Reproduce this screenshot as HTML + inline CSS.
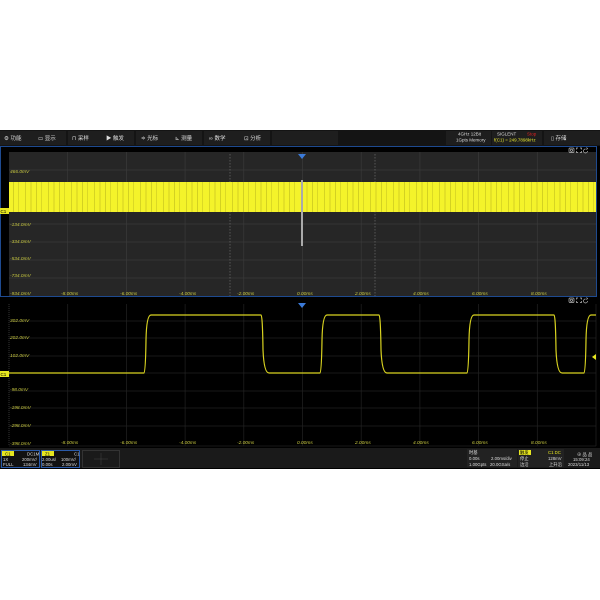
<!DOCTYPE html><html><head><style>
body{margin:0;background:#fff;width:600px;height:600px;overflow:hidden}
svg{display:block}
text{font-family:"Liberation Sans","Noto Sans CJK SC",sans-serif}
</style></head><body>
<svg width="600" height="600" viewBox="0 0 600 600">
<defs>
<pattern id="nz" width="23" height="30" patternUnits="userSpaceOnUse">
<rect width="23" height="30" fill="#f4f32a"/>
<rect x="2" width="1" height="30" fill="#c9c820" opacity=".7"/>
<rect x="7" width="2" height="30" fill="#d8d625" opacity=".6"/>
<rect x="13" width="1" height="30" fill="#bdbb1c" opacity=".6"/>
<rect x="18" width="1" height="30" fill="#d0cf22" opacity=".7"/>
</pattern>
<g id="ic" fill="none" stroke="#bbb" stroke-width=".7">
<rect x="0" y="0.5" width="5" height="4.5" rx="1"/><circle cx="2.5" cy="2.8" r="1.1"/>
<path d="M9 0.5h-1.5v1.5M11 0.5h1.5v1.5M9 5h-1.5v-1.5M11 5h1.5v-1.5"/>
<path d="M16.5 1.5a2 2 0 1 0 2 2M17.5 0l1 1.2-1.2 0.8"/>
</g>
</defs>
<rect x="0" y="130" width="600" height="339" fill="#000"/>
<rect x="0" y="130" width="600" height="16" fill="#141414"/>
<g fill="#1e1e1e">
<rect x="0" y="131" width="66" height="14"/><rect x="68" y="131" width="66" height="14"/><rect x="136" y="131" width="66" height="14"/><rect x="204" y="131" width="66" height="14"/><rect x="272" y="131" width="66" height="14"/>
<rect x="446" y="131" width="45" height="14"/><rect x="492" y="131" width="50" height="14"/><rect x="544" y="131" width="56" height="14"/>
</g>
<g font-size="5.5" fill="#ddd">
<text x="4" y="140">⚙ 功能</text><text x="38" y="140">▭ 显示</text><text x="72" y="140">⊓ 采样</text><text x="106" y="140">▶ 触发</text><text x="141" y="140">≑ 光标</text><text x="175" y="140">⊾ 测量</text><text x="209" y="140">∞ 数学</text><text x="244" y="140">⊡ 分析</text>
<text x="458" y="135.5" font-size="4.5">4GHz 12Bit</text><text x="456" y="141.5" font-size="4.5">1Gpts Memory</text>
<text x="497" y="135.5" font-size="4.5">SIGLENT</text><text x="527" y="135.5" font-size="4.5" fill="#d22">Stop</text>
<text x="494" y="141.5" font-size="4.5" fill="#e6e630">f(C1) = 249.7898kHz</text>
<text x="551" y="140">▯ 存储</text>
</g>
<rect x="0.5" y="146.5" width="596" height="150" fill="#000" stroke="#1e4a90"/>
<rect x="9" y="152" width="587" height="144" fill="#262626"/>
<g stroke="#3a3a3a" stroke-width="0.7">
<path d="M67.7 152V296M126.4 152V296M185.1 152V296M243.8 152V296M302.5 152V296M361.2 152V296M419.9 152V296M478.6 152V296M537.3 152V296"/>
<path d="M9 170H596M9 188H596M9 206H596M9 224H596M9 242H596M9 260H596M9 278H596"/>
</g>
<path d="M230 154V296M375 154V296" stroke="#777" stroke-width=".6" stroke-dasharray="1.5 1.5"/>
<rect x="9" y="182" width="587" height="30" fill="url(#nz)"/>
<rect x="301" y="180" width="2" height="66" fill="#aaa"/>
<path d="M298 154h8l-4 5z" fill="#3b7ad8"/>
<rect x="0" y="208" width="9" height="6" fill="#e6e620"/><text x="0.5" y="213" font-size="4.5" fill="#000">C1</text>
<g font-size="4.8" fill="#c8c840" font-style="italic">
<text x="10" y="173">466.0mV</text><text x="10" y="226">-134.0mV</text><text x="10" y="243">-334.0mV</text><text x="10" y="260">-534.0mV</text><text x="10" y="277">-734.0mV</text><text x="10" y="295">-934.0mV</text>
<text x="61" y="295">-8.00ms</text><text x="120" y="295">-6.00ms</text><text x="179" y="295">-4.00ms</text><text x="237" y="295">-2.00ms</text><text x="297" y="295">0.00ms</text><text x="355" y="295">2.00ms</text><text x="413" y="295">4.00ms</text><text x="472" y="295">6.00ms</text><text x="531" y="295">8.00ms</text>
</g>
<use href="#ic" x="569" y="147.5"/>
<use href="#ic" x="569" y="297.5"/>
<g stroke="#222" stroke-width="0.7">
<path d="M67.7 304V446M126.4 304V446M185.1 304V446M243.8 304V446M302.5 304V446M361.2 304V446M419.9 304V446M478.6 304V446M537.3 304V446M596 304V446"/>
<path d="M9 321H596M9 338H596M9 356H596M9 373H596M9 391H596M9 408H596M9 426H596M9 446H596"/>
</g>
<path d="M9 304V446" stroke="#555" stroke-width=".6" stroke-dasharray="1 1"/>
<path d="M298 303h8l-4 5z" fill="#3b7ad8"/>
<path d="M9 373H144Q145.5 373 146 340Q146.5 315 151 315H261Q262.5 315 263 350Q264 373 269 373H320Q321.5 373 322 340Q322.5 315 327 315H379Q380.5 315 381 350Q382 373 387 373H467Q468.5 373 469 340Q469.5 315 474 315H554Q555.5 315 556 350Q557 373 562 373H584Q585.5 373 586 340Q586.5 315 591 315H596" fill="none" stroke="#d9d320" stroke-width="1.2"/>
<path d="M596 354l-4 3 4 3z" fill="#e6e620"/>
<rect x="0" y="371" width="9" height="6" fill="#e6e620"/><text x="0.5" y="376" font-size="4.5" fill="#000">C1</text>
<g font-size="4.8" fill="#c8c840" font-style="italic">
<text x="10" y="322">302.0mV</text><text x="10" y="339">202.0mV</text><text x="10" y="357">102.0mV</text><text x="10" y="391">-98.0mV</text><text x="10" y="409">-198.0mV</text><text x="10" y="427">-298.0mV</text><text x="10" y="445">-398.0mV</text>
<text x="61" y="444">-8.00ms</text><text x="120" y="444">-6.00ms</text><text x="179" y="444">-4.00ms</text><text x="237" y="444">-2.00ms</text><text x="297" y="444">0.00ms</text><text x="355" y="444">2.00ms</text><text x="413" y="444">4.00ms</text><text x="472" y="444">6.00ms</text><text x="531" y="444">8.00ms</text>
</g>
<rect x="0" y="448" width="600" height="20" fill="#1a1a1a"/>
<rect x="1.5" y="450.5" width="38" height="17" fill="#111" stroke="#2a5aa8"/>
<rect x="2" y="451" width="12" height="5" fill="#e6e620"/>
<rect x="41.5" y="450.5" width="38" height="17" fill="#111" stroke="#2a5aa8"/>
<rect x="42" y="451" width="12" height="5" fill="#e6e620"/>
<rect x="82.5" y="450.5" width="37" height="17" fill="none" stroke="#333"/>
<path d="M94 459h14M101 453v12" stroke="#444" stroke-width=".5"/>
<g font-size="4.3" fill="#ddd">
<text x="5" y="455.5" fill="#000">C1</text><text x="27" y="455.5">DC1M</text>
<text x="3" y="461">1X</text><text x="22" y="461">200mV/</text><text x="3" y="466">FULL</text><text x="23" y="466">134mV</text>
<text x="45" y="455.5" fill="#000">Z1</text><text x="74" y="455.5">C1</text>
<text x="42" y="461">2.00us/</text><text x="61" y="461">100mV/</text><text x="42" y="466">0.00s</text><text x="62" y="466">2.00mV</text>
</g>
<rect x="467" y="449" width="50" height="18" fill="#222"/>
<rect x="518" y="449" width="46" height="18" fill="#222"/>
<rect x="519" y="450" width="12" height="5" fill="#e6e620"/>
<g font-size="4.3" fill="#ddd">
<text x="469" y="454">时基</text><text x="469" y="460">0.00s</text><text x="491" y="460">2.00ms/div</text><text x="469" y="466">1.00Gpts</text><text x="490" y="466">20.0GSa/s</text>
<text x="520" y="454" fill="#000">触发</text><text x="548" y="454" fill="#e6e620">C1 DC</text>
<text x="520" y="460">停止</text><text x="548" y="460">128mV</text><text x="520" y="466">边沿</text><text x="549" y="466">上升沿</text>
<text x="577" y="456">⊕ 品 品</text><text x="573" y="461">15:09:24</text><text x="568" y="466">2023/11/13</text>
</g>
</svg>
</body></html>
